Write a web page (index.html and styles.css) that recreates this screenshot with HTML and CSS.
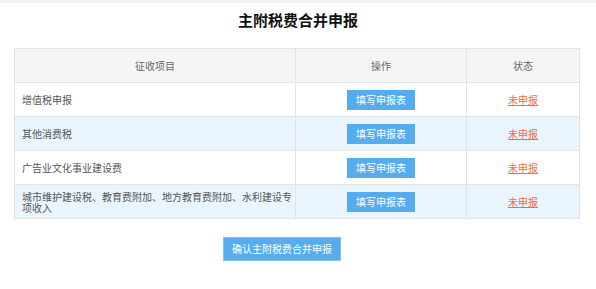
FILE: index.html
```html
<!DOCTYPE html>
<html lang="zh-CN">
<head>
<meta charset="utf-8">
<title>主附税费合并申报</title>
<link rel="stylesheet" href="styles.css">
</head>
<body>
<div class="strip"></div>
<h1 class="title">主附税费合并申报</h1>
<table class="grid">
  <thead>
    <tr><th class="c1">征收项目</th><th class="c2">操作</th><th class="c3">状态</th></tr>
  </thead>
  <tbody>
    <tr><td class="item">增值税申报</td><td class="op"><button class="btn">填写申报表</button></td><td class="st"><a class="link" href="#">未申报</a></td></tr>
    <tr class="alt"><td class="item">其他消费税</td><td class="op"><button class="btn">填写申报表</button></td><td class="st"><a class="link" href="#">未申报</a></td></tr>
    <tr><td class="item">广告业文化事业建设费</td><td class="op"><button class="btn">填写申报表</button></td><td class="st"><a class="link" href="#">未申报</a></td></tr>
    <tr class="alt"><td class="item multi">城市维护建设税、教育费附加、地方教育费附加、水利建设专项收入</td><td class="op"><button class="btn">填写申报表</button></td><td class="st"><a class="link" href="#">未申报</a></td></tr>
  </tbody>
</table>
<div class="actions"><button class="confirm">确认主附税费合并申报</button></div>
</body>
</html>
```
FILE: styles.css
```css
html, body {
  margin: 0;
  padding: 0;
  background: #fff;
  font-family: "Noto Sans CJK SC", "Noto Sans", sans-serif;
}
.strip {
  height: 3px;
  background: #f3f3f3;
}
.title {
  margin: 7px 0 18px;
  font-size: 15px;
  line-height: 20px;
  font-weight: bold;
  color: #111;
  text-align: center;
}
.grid {
  margin-left: 14px;
  width: 566px;
  border-collapse: collapse;
  table-layout: fixed;
  font-size: 10px;
}
.grid th, .grid td {
  border: 1px solid #e4e4e4;
  height: 33px;
  padding: 0;
  vertical-align: middle;
}
.grid th {
  background: #f5f5f5;
  color: #666;
  font-weight: normal;
  text-align: center;
}
.c1 { width: 280px; }
.c2 { width: 170px; }
.grid td { color: #555; }
.item {
  padding: 0 1px 0 7px !important;
  text-align: left;
}
.multi { line-height: 11px; }
.alt td { background: #eaf4fd; }
.op, .st { text-align: center; }
.btn {
  width: 68px;
  height: 20px;
  border: 0;
  padding: 0;
  background: #55acee;
  color: #fff;
  font-family: inherit;
  font-size: 10px;
  cursor: pointer;
}
.link {
  color: #ff6a3a;
  text-decoration: underline;
  font-size: 10px;
}
.actions {
  padding-left: 223px;
  margin-top: 15px;
}
.confirm {
  width: 118px;
  height: 24px;
  border: 1px solid #82c2f3;
  padding: 0;
  background: #55acee;
  color: #fff;
  font-family: inherit;
  font-size: 10px;
}
```
